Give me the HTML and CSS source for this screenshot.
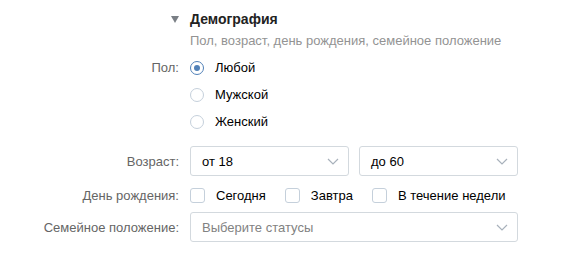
FILE: index.html
```html
<!DOCTYPE html>
<html lang="ru">
<head>
  <meta charset="UTF-8">
  <title>Демография</title>
  <link rel="stylesheet" href="styles.css">
</head>
<body>
  <div class="section">
    <div class="section-head">
      <svg class="arrow" width="8" height="7" viewBox="0 0 8 7"><path d="M0 0h8L4 7z" fill="#7a7f85"/></svg>
      <span class="section-title">Демография</span>
    </div>
    <div class="section-sub">Пол, возраст, день рождения, семейное положение</div>

    <!-- Пол -->
    <div class="row row-radio">
      <div class="label">Пол:</div>
      <div class="field">
        <label class="radio checked"><span class="dot"></span>Любой</label>
      </div>
    </div>
    <div class="row row-radio">
      <div class="label"></div>
      <div class="field">
        <label class="radio"><span class="dot"></span>Мужской</label>
      </div>
    </div>
    <div class="row row-radio">
      <div class="label"></div>
      <div class="field">
        <label class="radio"><span class="dot"></span>Женский</label>
      </div>
    </div>

    <!-- Возраст -->
    <div class="row row-select">
      <div class="label">Возраст:</div>
      <div class="field pair">
        <div class="select">
          <span>от 18</span>
          <svg class="chevron" width="12" height="7" viewBox="0 0 12 7"><path d="M1 1l5 5 5-5" fill="none" stroke="#a8b1bb" stroke-width="1.2"/></svg>
        </div>
        <div class="select">
          <span>до 60</span>
          <svg class="chevron" width="12" height="7" viewBox="0 0 12 7"><path d="M1 1l5 5 5-5" fill="none" stroke="#a8b1bb" stroke-width="1.2"/></svg>
        </div>
      </div>
    </div>

    <!-- День рождения -->
    <div class="row row-check">
      <div class="label">День рождения:</div>
      <div class="field checks">
        <label class="check"><span class="box"></span>Сегодня</label>
        <label class="check"><span class="box"></span>Завтра</label>
        <label class="check"><span class="box"></span>В течение недели</label>
      </div>
    </div>

    <!-- Семейное положение -->
    <div class="row row-select row-status">
      <div class="label">Семейное положение:</div>
      <div class="field">
        <div class="select wide">
          <span class="placeholder">Выберите статусы</span>
          <svg class="chevron" width="12" height="7" viewBox="0 0 12 7"><path d="M1 1l5 5 5-5" fill="none" stroke="#a8b1bb" stroke-width="1.2"/></svg>
        </div>
      </div>
    </div>
  </div>
</body>
</html>
```

FILE: styles.css
```css
body {
  margin: 0;
  padding: 0;
  background-color: #fff;
  font-family: "Liberation Sans", Arial, sans-serif;
  font-size: 13px;
  color: #000;
}

.section {
  padding-top: 10px;
}

.section-head {
  display: flex;
  align-items: center;
  height: 18px;
  padding-left: 171px;
}

.arrow {
  display: block;
  margin-right: 11px;
}

.section-title {
  font-weight: bold;
  font-size: 14px;
  color: #222;
}

.section-sub {
  padding-left: 190px;
  margin-top: 4px;
  height: 18px;
  line-height: 18px;
  color: #939393;
  font-size: 13px;
}

.row {
  display: flex;
  align-items: center;
  white-space: nowrap;
}

.label {
  width: 179px;
  text-align: right;
  color: #656565;
  flex-shrink: 0;
}

.field {
  margin-left: 11px;
}

.row-radio {
  height: 27px;
}

.section-sub + .row-radio {
  margin-top: 4px;
}

.radio {
  display: flex;
  align-items: center;
}

.radio .dot {
  width: 12px;
  height: 12px;
  border: 1px solid #c5d0db;
  border-radius: 50%;
  margin-right: 11px;
  position: relative;
}

.radio.checked .dot {
  border-color: #5181b8;
}

.radio.checked .dot::after {
  content: "";
  position: absolute;
  left: 3px;
  top: 3px;
  width: 6px;
  height: 6px;
  border-radius: 50%;
  background-color: #5181b8;
}

.row-select {
  height: 30px;
  margin-top: 11px;
}

.row-status {
  margin-top: 2px;
}

.pair {
  display: flex;
  gap: 10px;
}

.select {
  box-sizing: border-box;
  height: 30px;
  width: 159px;
  border: 1px solid #d3d9de;
  border-radius: 3px;
  display: flex;
  align-items: center;
  justify-content: space-between;
  padding: 0 9px 0 11px;
  color: #000;
}

.select.wide {
  width: 328px;
}

.placeholder {
  color: #828282;
}

.chevron {
  display: block;
}

.row-check {
  height: 30px;
  margin-top: 4px;
}

.checks {
  display: flex;
}

.check {
  display: flex;
  align-items: center;
  margin-right: 19px;
}

.check .box {
  width: 13px;
  height: 13px;
  border: 1px solid #c5d0db;
  border-radius: 3px;
  margin-right: 11px;
}
```
